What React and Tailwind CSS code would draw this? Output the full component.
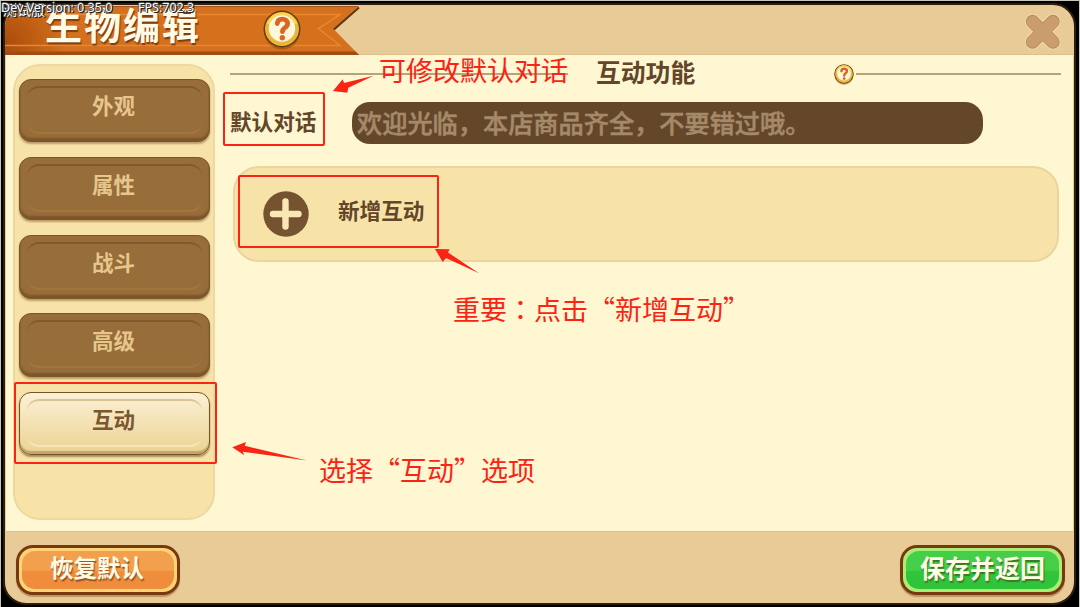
import React, { useState } from 'react'
import clsx from 'clsx'

const TABS = ['外观', '属性', '战斗', '高级', '互动']

function HelpBadge({ className }) {
  return (
    <svg viewBox="0 0 38 40" className={className}>
      <ellipse cx="19" cy="21.5" rx="18" ry="18" fill="#8a4512" opacity="0.5" />
      <circle cx="19" cy="19" r="18.5" fill="#6b3a10" />
      <circle cx="19" cy="19" r="17" fill="#e9b63c" />
      <path d="M4 14a15.5 15.5 0 0 1 30 0z" fill="#f9d455" />
      <circle cx="19" cy="18.5" r="13.2" fill="#fff8d8" />
      <path
        d="M14.2 13.6c.3-3 2.2-4.4 5-4.4 3.3 0 5.4 1.7 5.4 4.5 0 4-5.2 3.8-5.2 8"
        fill="none"
        stroke="#dd6427"
        strokeWidth="4.8"
        strokeLinecap="round"
      />
      <circle cx="19.3" cy="27.8" r="2.7" fill="#dd6427" />
    </svg>
  )
}

function Ribbon() {
  return (
    <svg viewBox="0 0 356 52" className="absolute left-0 top-0 h-[52px] w-[356px]">
      <defs>
        <radialGradient id="ribbon" gradientUnits="userSpaceOnUse" cx="0" cy="38" r="62">
          <stop offset="0" stopColor="#a94c0c" />
          <stop offset="1" stopColor="#d5711c" />
        </radialGradient>
      </defs>
      <path d="M0 1H354L329 24.5L354 50H0z" fill="url(#ribbon)" />
      <path d="M0 1.5H353" stroke="#a5561a" />
      <path d="M0 46.5H350.5L354 50H0z" fill="#a04a14" />
      <path d="M354 2.5L329 24.5" fill="none" stroke="#5c3515" strokeWidth="2" />
      <path d="M0 9.5H335L313.5 23.5L335 40.5H0" fill="none" stroke="#e98630" strokeWidth="1.5" />
    </svg>
  )
}

function TabButton({ label, active, onClick }) {
  return (
    <button
      onClick={onClick}
      className={clsx(
        'flex h-[63.5px] w-[191px] shrink-0 rounded-xl border p-[7px] pt-1.5',
        active
          ? 'border-[#755328] bg-linear-to-b from-[#fcf1d6] to-[#ecd291] shadow-[inset_0_-3px_1px_#c6a568,0_2px_2px_#a98c5c]'
          : 'border-[#7b5428] bg-[#976d3a] shadow-[inset_0_-3px_2px_#7c5529,0_2px_2px_#b99e6a]'
      )}
    >
      <span
        className={clsx(
          'flex h-[48px] w-full items-center justify-center rounded-xl border-y-2 pr-px pb-[8px] text-[21.5px] font-bold',
          active
            ? 'border-t-[#d9c493] border-b-[#f7e7b7] text-[#7a5832]'
            : 'border-t-[#825a2a] border-b-[#a5763b] text-[#e6c68c]'
        )}
      >
        {label}
      </span>
    </button>
  )
}

function CloseIcon() {
  return (
    <svg viewBox="0 0 40 40" className="h-10 w-10">
      <path d="M9.5 9.5L30 30M30 9.5L9.5 30" stroke="#f3d9a9" strokeWidth="15.4" strokeLinecap="round" />
      <path d="M9.5 9.5L30 30M30 9.5L9.5 30" stroke="#b98d58" strokeWidth="13.4" strokeLinecap="round" />
      <path d="M9.7 10L29.8 29.8M29.8 10L9.7 29.8" stroke="#c99d6c" strokeWidth="12" strokeLinecap="round" />
    </svg>
  )
}

// Red guide boxes, arrows and captions drawn over the editor
function Annotations() {
  return (
    <div className="pointer-events-none absolute -top-px -left-px h-[607px] w-[1080px] text-[27px] leading-none text-[#fb2314]">
      <div className="absolute left-[14px] top-[382px] h-[82px] w-[203px] rounded-xs border-2" />
      <div className="absolute left-[223px] top-[92px] h-[54px] w-[102px] rounded-xs border-2" />
      <div className="absolute left-[238px] top-[175px] h-[73px] w-[201px] rounded-xs border-2" />
      <svg viewBox="0 0 1080 607" className="absolute inset-0 h-full w-full" fill="currentColor">
        <path d="M333 91L342.7 79.3L344 83L373.5 75.7L348.3 87.7L347.3 92.7z" />
        <path d="M435 249L449.5 249.2L448 252.5L479 273.3L446 258L442.7 262z" />
        <path d="M232.3 447.3L246 442L244.7 445.7L307 460.5L242.7 451.7L244.3 455.3z" />
      </svg>
      <p className="absolute left-[379px] top-[56px] whitespace-nowrap">可修改默认对话</p>
      <p className="absolute left-[453px] top-[295px] whitespace-nowrap">
        重要<span lang="zh-TW" className="font-['Noto_Sans_CJK_TC',sans-serif]">：</span>点击“新增互动”
      </p>
      <p className="absolute left-[319px] top-[456px] whitespace-nowrap">选择“互动”选项</p>
    </div>
  )
}

export default function App() {
  const [tab, setTab] = useState('互动')

  return (
    <div
      lang="zh-CN"
      className="relative h-[607px] w-[1080px] overflow-hidden border-x border-t border-[#c9c7b8] bg-black pt-[2px] pl-[2px] font-['Noto_Sans_CJK_SC',sans-serif]"
    >
      <div className="relative flex h-[602px] w-[1073px] flex-col overflow-hidden rounded-[23px] border-2 border-[#2e1e0e] bg-[#e9cb97]">

        {/* Title bar */}
        <header className="flex h-[50px] shrink-0 items-center justify-between border-b border-[#dcbf8b]">
          <Ribbon />
          <div className="relative flex items-center pl-10">
            <h1 className="w-[218px] pb-3 text-[37px] leading-10 font-bold tracking-[2px] whitespace-nowrap text-[#fffbe6] [text-shadow:1px_2px_1px_#7c3d10]">
              生物编辑
            </h1>
            <HelpBadge className="h-10 w-[38px]" />
          </div>
          <button className="mr-[11px] mt-1">
            <CloseIcon />
          </button>
        </header>

        <main className="mx-px flex h-[477px] shrink-0 border-b border-[#dcbf8b] bg-[#fef7d2] pt-[9px] pl-[7px]">

          {/* Tabs */}
          <nav className="flex h-[456px] w-[202px] shrink-0 flex-col items-center gap-[14.8px] rounded-[27px] border-2 border-[#ecd9a1] bg-[#f7e3a8] pt-[12.5px]">
            {TABS.map((name) => (
              <TabButton key={name} label={name} active={name === tab} onClick={() => setTab(name)} />
            ))}
          </nav>

          <section className="ml-[15px] flex flex-col">
            {/* Section heading */}
            <div className="flex h-5 w-[831px] items-center">
              <div className="h-0.5 w-[338px] bg-[#b5a37a]" />
              <h2 className="ml-7 pb-1.5 text-[24.8px] leading-5 font-bold text-[#63452a]">互动功能</h2>
              <HelpBadge className="ml-[139px] h-[21px] w-5" />
              <div className="ml-0.5 h-0.5 flex-1 bg-[#b5a37a]" />
            </div>

            {/* Default dialogue */}
            <div className="mt-[18px] flex h-[42px] items-center">
              <label className="w-[122px] pb-[4px] text-[21.6px] leading-none font-bold text-[#63452a]">默认对话</label>
              <div className="flex h-[42px] w-[631px] items-center rounded-[18px] bg-[#644729] pl-[5px] text-[25.2px] leading-none font-medium whitespace-nowrap text-[#a58a6a] [-webkit-text-stroke:0.5px_#a58a6a]">
                欢迎光临，本店商品齐全，不要错过哦。
              </div>
            </div>

            {/* Add interaction */}
            <div className="mt-[22px] ml-[3px] flex h-[96px] w-[826px] items-center rounded-[26px] border-2 border-[#e9d5a0] bg-[#f7e3a8] pl-7">
              <svg viewBox="0 0 46 46" className="h-[46px] w-[46px]">
                <circle cx="23" cy="23" r="22.7" fill="#755331" />
                <path d="M22.5 10.5V35.5M10 23H35.5" stroke="#fae8b4" strokeWidth="6.4" strokeLinecap="round" />
              </svg>
              <span className="ml-[29px] pb-2 text-[21.6px] leading-none font-bold text-[#63452a]">新增互动</span>
            </div>
          </section>
        </main>

        {/* Actions */}
        <footer className="flex flex-1 items-start justify-between pt-[13px] pr-[9px] pl-[11px]">
          <button className="flex h-[50px] w-[164px] items-center justify-center rounded-[17px] border-[3px] border-[#773910] bg-[#ffd275] p-[3px] shadow-[0_2px_1px_#bd9563]">
            <span className="flex h-full w-full items-center justify-center rounded-[13px] bg-linear-to-b from-[#f2a04d] from-50% to-[#ef8d3d] to-55% pr-0.5 pb-1 text-[23.5px] leading-none font-bold text-[#fffbe6] [text-shadow:1px_2px_1px_#9b5523]">
              恢复默认
            </span>
          </button>
          <button className="flex h-[50px] w-[165px] items-center justify-center rounded-[17px] border-[3px] border-[#773910] bg-[#a9ed76] p-[3px] shadow-[0_2px_1px_#bd9563]">
            <span className="flex h-full w-full items-center justify-center rounded-[13px] bg-linear-to-b from-[#45cf48] from-50% to-[#30c43a] to-55% pb-[5px] text-[25px] leading-none font-bold whitespace-nowrap text-[#fffbe6] [text-shadow:1px_2px_1px_#3a7a20]">
              保存并返回
            </span>
          </button>
        </footer>
      </div>

      {/* Debug readout */}
      <div className="absolute top-0 left-0 text-[12.5px] leading-[14px] whitespace-nowrap text-white font-['Noto_Sans','Noto_Sans_CJK_SC',sans-serif] [text-shadow:1px_1px_0_#222,-1px_0_0_#555,0_-1px_0_#555,1px_0_0_#333]">
        <span className="absolute top-0.5 left-0.5 text-[14px]">测试服</span>
        <span className="absolute top-0 left-0">Dev Version: 0.35.0</span>
        <span className="absolute top-0 left-[137px]">FPS:702.3</span>
      </div>

      <Annotations />
    </div>
  )
}
